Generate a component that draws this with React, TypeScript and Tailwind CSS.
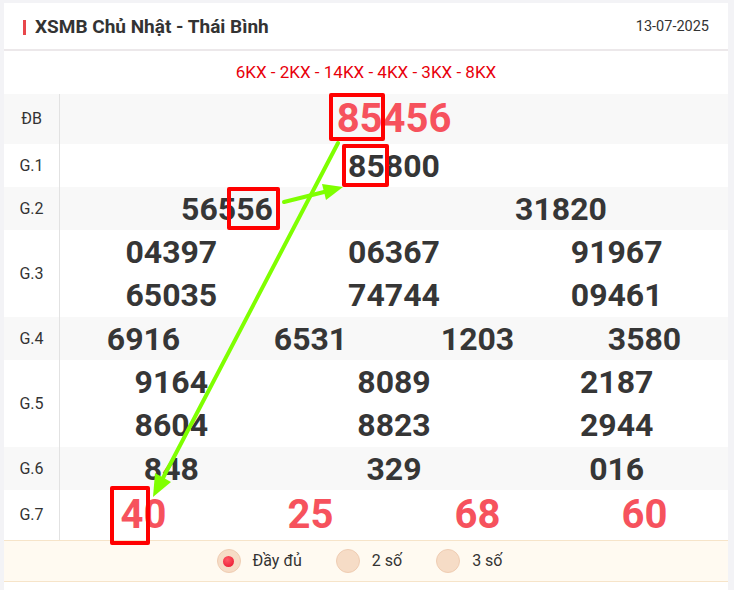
import React from "react";

type Row = { label: string; nums: string[]; cols: number; red?: boolean; big?: boolean; gray?: boolean };

const rows: Row[] = [
  { label: "ĐB", nums: ["85456"], cols: 1, red: true, big: true, gray: true },
  { label: "G.1", nums: ["85800"], cols: 1 },
  { label: "G.2", nums: ["56556", "31820"], cols: 2, gray: true },
  { label: "G.3", nums: ["04397", "06367", "91967", "65035", "74744", "09461"], cols: 3 },
  { label: "G.4", nums: ["6916", "6531", "1203", "3580"], cols: 4, gray: true },
  { label: "G.5", nums: ["9164", "8089", "2187", "8604", "8823", "2944"], cols: 3 },
  { label: "G.6", nums: ["848", "329", "016"], cols: 3, gray: true },
  { label: "G.7", nums: ["40", "25", "68", "60"], cols: 4, red: true, big: true },
];

const gridCols: Record<number, string> = {
  1: "grid-cols-1",
  2: "grid-cols-2",
  3: "grid-cols-3",
  4: "grid-cols-4",
};

function PrizeRow({ row }: { row: Row }) {
  const lines = row.nums.length / row.cols;
  return (
    <div className={`flex ${row.gray ? "bg-[#f8f8f8]" : "bg-white"}`}>
      <div className="flex w-[56px] shrink-0 items-center justify-center border-r border-[#e2e2e2] text-[16px] text-[#333]">
        {row.label}
      </div>
      <div
        className={`grid flex-1 ${gridCols[row.cols]} ${row.big ? "h-[50px]" : lines > 1 ? "h-[87px] py-[1px]" : "h-[43px]"}`}
      >
        {row.nums.map((n, i) => (
          <div
            key={i}
            className={`flex items-center justify-center font-bold leading-none ${
              row.red ? "text-[40px] text-[#f6525d]" : "text-[32px] text-[#363636]"
            }`}
          >
            {n}
          </div>
        ))}
      </div>
    </div>
  );
}

function Radio({ label, checked }: { label: string; checked?: boolean }) {
  return (
    <div className="flex items-center gap-[12px]">
      <span className="flex h-[24px] w-[24px] items-center justify-center rounded-full border border-[#efcdb3] bg-[#f6dcc6]">
        {checked && (
          <span className="h-[11px] w-[11px] rounded-full bg-[radial-gradient(circle_at_40%_35%,#ff5a66,#e8102a)]" />
        )}
      </span>
      <span className="text-[16px] text-[#333]">{label}</span>
    </div>
  );
}

export default function App() {
  return (
    <div className="relative h-[590px] w-full overflow-hidden bg-[#f3f3f6] pl-[4px] pr-[6px] pt-[3px] font-['Roboto',sans-serif]">
      <div className="h-full bg-white">
        {/* Tiêu đề */}
        <div className="flex h-[48px] items-center justify-between border-b-2 border-[#ece8ea] pl-[19px] pr-[19px] pt-[2px]">
          <div className="flex items-center gap-[9px]">
            <span className="h-[15px] w-[3px] bg-[#e8474c]" />
            <span className="text-[19px] font-bold text-[#333]">XSMB Chủ Nhật - Thái Bình</span>
          </div>
          <span className="text-[14.5px] text-[#333]">13-07-2025</span>
        </div>

        <div className="flex h-[43px] items-center justify-center text-[17px] text-[#e8000b]">
          6KX - 2KX - 14KX - 4KX - 3KX - 8KX
        </div>

        {rows.map((r) => (
          <PrizeRow key={r.label} row={r} />
        ))}

        {/* Chọn kiểu hiển thị */}
        <div className="flex h-[42px] items-center justify-center gap-[34px] border-y border-[#f6e4c9] bg-[#fffaf1] pr-[13px]">
          <Radio label="Đầy đủ" checked />
          <Radio label="2 số" />
          <Radio label="3 số" />
        </div>
      </div>

      {/* Khung đánh dấu */}
      <div className="absolute left-[329px] top-[93px] h-[48px] w-[56px] rounded-[2px] border-4 border-[#ff0000]" />
      <div className="absolute left-[342px] top-[144px] h-[43px] w-[47px] rounded-[2px] border-4 border-[#ff0000]" />
      <div className="absolute left-[227px] top-[187px] h-[43px] w-[53px] rounded-[2px] border-4 border-[#ff0000]" />
      <div className="absolute left-[110px] top-[486px] h-[59px] w-[40px] rounded-[2px] border-4 border-[#ff0000]" />

      <svg className="pointer-events-none absolute left-0 top-0" width="734" height="590">
        <line x1="338" y1="143" x2="163" y2="478" stroke="#7fff00" strokeWidth="4" strokeLinecap="round" />
        <polygon points="153,497 171,482 155,473" fill="#7fff00" />
        <line x1="284" y1="202" x2="324" y2="192" stroke="#7fff00" strokeWidth="4" strokeLinecap="round" />
        <polygon points="343,187 326,200 322,184" fill="#7fff00" />
      </svg>
    </div>
  );
}
